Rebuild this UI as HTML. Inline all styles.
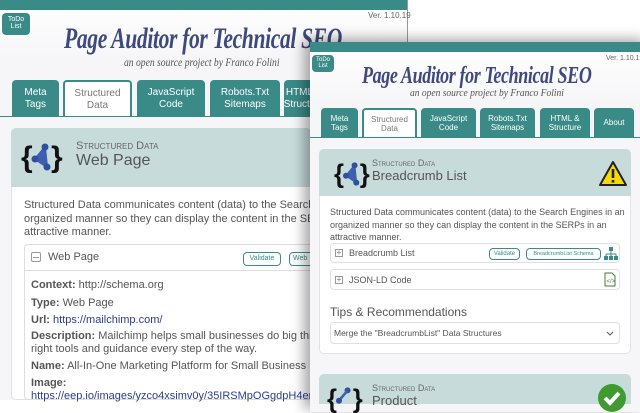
<!DOCTYPE html>
<html><head><meta charset="utf-8"><style>
*{margin:0;padding:0;box-sizing:border-box}
body{width:640px;height:400px;overflow:hidden;background:#fff;font-family:"Liberation Sans",sans-serif;position:relative;color:#555}
.a{position:absolute}
.teal{background:#3a8a88}
.todo{background:#3a8a88;color:#fff;border-radius:4px;text-align:center;line-height:1.05}
.title{font-family:"Liberation Serif",serif;font-style:italic;font-weight:bold;color:#3f4a7c;white-space:nowrap;letter-spacing:-0.5px;transform-origin:0 0}
.sub{font-family:"Liberation Serif",serif;font-style:italic;color:#555;white-space:nowrap;transform-origin:0 0}
.tab{position:absolute;background:#3a8a88;color:#fff;text-align:center;border-radius:4px 4px 0 0;display:flex;align-items:center;justify-content:center;line-height:1.15}
.tab.act{background:#fff;color:#777;border:2px solid #3a8a88;border-bottom:none}
.hdr{background:#c8dbdb;border-radius:5px 5px 0 0}
.sc{font-variant:small-caps;color:#666}
.btn{position:absolute;border:1px solid #3a8a88;border-radius:4px;color:#3a8a88;text-align:center;background:#fff}
.t{white-space:nowrap}
b{color:#555}
</style></head><body>
<div class="a" style="left:0;top:0;width:407px;height:400px;background:linear-gradient(#fff,#f6f6f8 60px,#f6f6f8)"></div>
<div class="a teal" style="left:0;top:0;width:407px;height:10px"></div>
<div class="a" style="left:407px;top:0;width:1px;height:42px;background:#999"></div>
<div class="a todo" style="left:2px;top:13px;width:28px;height:22px;font-size:7px;padding-top:3px">ToDo<br>List</div>
<div class="a t" style="left:368px;top:11px;font-size:8px;color:#666">Ver. 1.10.19</div>
<div class="a title" style="left:64px;top:22px;font-size:30px;transform:scaleX(0.72)">Page Auditor for Technical SEO</div>
<div class="a sub" style="left:124px;top:55px;font-size:12px;transform:scaleX(0.8)">an open source project by Franco Folini</div>
<div class="tab" style="left:12px;top:80px;width:47px;height:37px;font-size:10px">Meta<br>Tags</div>
<div class="tab act" style="left:63px;top:80px;width:69px;height:37px;font-size:10px">Structured<br>Data</div>
<div class="tab" style="left:137px;top:80px;width:68px;height:37px;font-size:10px">JavaScript<br>Code</div>
<div class="tab" style="left:210px;top:80px;width:70px;height:37px;font-size:10px">Robots.Txt<br>Sitemaps</div>
<div class="tab" style="left:284px;top:80px;width:40px;height:37px;font-size:10px">HTML &amp;<br>Structure</div>
<div class="a teal" style="left:0;top:116px;width:310px;height:1px"></div>
<div class="a" style="left:11px;top:128px;width:300px;height:272px;background:#fff;border:1px solid #e2e2e2;border-radius:5px"></div>
<div class="a hdr" style="left:11px;top:128px;width:300px;height:59px"></div>
<svg class="a" style="left:21px;top:141px" width="42" height="32" viewBox="0 0 42 32"><text x="0" y="26" font-size="30" font-weight="bold" font-family="Liberation Sans" fill="#111">{</text><text x="30" y="26" font-size="30" font-weight="bold" font-family="Liberation Sans" fill="#111">}</text><path d="M24 6 L14 18 L26 26 Z" fill="#3c5fb0" stroke="#3c5fb0" stroke-width="2"/><circle cx="24" cy="6" r="3.5" fill="#2f4fa0"/><circle cx="14" cy="18" r="3.5" fill="#2f4fa0"/><circle cx="26" cy="26" r="3.5" fill="#2f4fa0"/></svg>
<div class="a sc t" style="left:76px;top:140px;font-size:11px">Structured Data</div>
<div class="a t" style="left:76px;top:152px;font-size:16px;color:#555">Web Page</div>
<div class="a" style="left:24px;top:199px;width:290px;font-size:11px;line-height:13.5px;color:#555;white-space:nowrap">Structured Data communicates content (data) to the Search Engines in an<br>organized manner so they can display the content in the SERPs in an<br>attractive manner.</div>
<div class="a" style="left:24px;top:244px;width:290px;height:156px;border:1px solid #ddd;border-radius:4px"></div>
<div class="a" style="left:24px;top:270px;width:290px;height:1px;background:#ddd"></div>
<div class="a" style="left:31px;top:252px;width:10px;height:10px;border:1px solid #999;border-radius:2px"></div>
<div class="a" style="left:33px;top:257px;width:6px;height:1px;background:#999"></div>
<div class="a t" style="left:48px;top:251px;font-size:11px">Web Page</div>
<div class="btn" style="left:243px;top:252px;width:38px;height:14px;font-size:7px;line-height:12px">Validate</div>
<div class="btn" style="left:289px;top:252px;width:40px;height:14px;font-size:7px;line-height:12px;text-align:left;padding-left:3px">Web</div>
<div class="a" style="left:31px;top:277px;font-size:11px;line-height:17.5px;white-space:nowrap;color:#555">
<b>Context:</b> http://schema.org<br><b>Type:</b> Web Page<br><b>Url:</b> <span style="color:#2a3d8f">https://mailchimp.com/</span></div>
<div class="a" style="left:31px;top:330px;font-size:11px;line-height:13px;white-space:nowrap;color:#555"><b>Description:</b> Mailchimp helps small businesses do big things, with the<br>right tools and guidance every step of the way.</div>
<div class="a t" style="left:31px;top:360px;font-size:11px"><b>Name:</b> All-In-One Marketing Platform for Small Business | Mailchimp</div>
<div class="a t" style="left:31px;top:377px;font-size:11px"><b>Image:</b></div>
<div class="a t" style="left:31px;top:390px;font-size:11px;color:#2a3d8f">https://eep.io/images/yzco4xsimv0y/35IRSMpOGgdpH4erz</div>
<!-- front window -->
<div class="a" style="left:310px;top:42px;width:340px;height:370px;background:linear-gradient(#fff,#f6f6f8 60px,#f6f6f8);box-shadow:-6px -3px 12px rgba(0,0,0,.35)"></div>
<div class="a teal" style="left:310px;top:42px;width:330px;height:10px"></div>
<div class="a todo" style="left:312px;top:55px;width:22px;height:17px;font-size:6px;padding-top:2px">ToDo<br>List</div>
<div class="a t" style="left:606px;top:55px;font-size:7px;color:#666">Ver. 1.10.19</div>
<div class="a title" style="left:362px;top:63px;font-size:24px;transform:scaleX(0.75)">Page Auditor for Technical SEO</div>
<div class="a sub" style="left:410px;top:88px;font-size:10px;transform:scaleX(0.95)">an open source project by Franco Folini</div>
<div class="tab" style="left:321px;top:108px;width:37px;height:30px;font-size:8px">Meta<br>Tags</div>
<div class="tab act" style="left:362px;top:108px;width:55px;height:30px;font-size:8px">Structured<br>Data</div>
<div class="tab" style="left:421px;top:108px;width:55px;height:30px;font-size:8px">JavaScript<br>Code</div>
<div class="tab" style="left:480px;top:108px;width:55px;height:30px;font-size:8px">Robots.Txt<br>Sitemaps</div>
<div class="tab" style="left:540px;top:108px;width:50px;height:30px;font-size:8px">HTML &amp;<br>Structure</div>
<div class="tab" style="left:594px;top:108px;width:40px;height:30px;font-size:8px">About</div>
<div class="a teal" style="left:310px;top:137px;width:330px;height:1px"></div>
<div class="a" style="left:319px;top:149px;width:312px;height:205px;background:#fff;border:1px solid #e2e2e2;border-radius:5px"></div>
<div class="a hdr" style="left:319px;top:149px;width:312px;height:47px"></div>
<svg class="a" style="left:334px;top:160px" width="36" height="28" viewBox="0 0 42 32"><text x="0" y="26" font-size="30" font-weight="bold" font-family="Liberation Sans" fill="#111">{</text><text x="30" y="26" font-size="30" font-weight="bold" font-family="Liberation Sans" fill="#111">}</text><path d="M24 6 L14 18 L26 26 Z" fill="#3c5fb0" stroke="#3c5fb0" stroke-width="2"/><circle cx="24" cy="6" r="3.5" fill="#2f4fa0"/><circle cx="14" cy="18" r="3.5" fill="#2f4fa0"/><circle cx="26" cy="26" r="3.5" fill="#2f4fa0"/></svg>
<div class="a sc t" style="left:372px;top:158px;font-size:9px">Structured Data</div>
<div class="a t" style="left:372px;top:168px;font-size:13px">Breadcrumb List</div>
<svg class="a" style="left:598px;top:160px" width="30" height="27" viewBox="0 0 30 27"><path d="M15 2 L28 25 L2 25 Z" fill="#f5d90a" stroke="#222" stroke-width="2" stroke-linejoin="round"/><rect x="13.7" y="9" width="2.6" height="9" fill="#222"/><rect x="13.7" y="20" width="2.6" height="2.6" fill="#222"/></svg>
<div class="a" style="left:330px;top:206px;font-size:9px;line-height:12.5px;white-space:nowrap;color:#555">Structured Data communicates content (data) to the Search Engines in an<br>organized manner so they can display the content in the SERPs in an<br>attractive manner.</div>
<div class="a" style="left:330px;top:243px;width:290px;height:20px;border:1px solid #e0e0e0;border-radius:4px"></div>
<div class="a" style="left:335px;top:249px;width:8px;height:8px;border:1px solid #999;font-size:8px;line-height:6px;text-align:center;color:#777">+</div>
<div class="a t" style="left:349px;top:248px;font-size:9px">Breadcrumb List</div>
<div class="btn" style="left:489px;top:248px;width:31px;height:12px;font-size:6px;line-height:10px">Validate</div>
<div class="btn" style="left:526px;top:248px;width:75px;height:12px;font-size:5.5px;line-height:10px">BreadcrumbList Schema</div>
<svg class="a" style="left:604px;top:247px" width="14" height="13"><rect x="5" y="0" width="4" height="4" fill="#3a8a88"/><path d="M7 4v3M2 7h10M2 7v2M7 7v2M12 7v2" stroke="#3a8a88" fill="none"/><rect x="0" y="9" width="4" height="4" fill="#3a8a88"/><rect x="5" y="9" width="4" height="4" fill="#3a8a88"/><rect x="10" y="9" width="4" height="4" fill="#3a8a88"/></svg>
<div class="a" style="left:330px;top:269px;width:290px;height:21px;border:1px solid #e0e0e0;border-radius:4px"></div>
<div class="a" style="left:335px;top:276px;width:8px;height:8px;border:1px solid #999;font-size:8px;line-height:6px;text-align:center;color:#777">+</div>
<div class="a t" style="left:349px;top:275px;font-size:9px">JSON-LD Code</div>
<svg class="a" style="left:604px;top:272px" width="12" height="15"><path d="M1 1h7l3 3v10H1z" fill="#fff" stroke="#4a7a3a"/><text x="2.5" y="11" font-size="6" fill="#4a7a3a">&lt;/&gt;</text></svg>
<div class="a t" style="left:330px;top:305px;font-size:12px;color:#555">Tips &amp; Recommendations</div>
<div class="a" style="left:330px;top:322px;width:290px;height:22px;border:1px solid #e0e0e0;border-radius:4px"></div>
<div class="a t" style="left:334px;top:328px;font-size:8.5px">Merge the "BreadcrumbList" Data Structures</div>
<svg class="a" style="left:606px;top:331px" width="8" height="5"><path d="M1 1l3 3l3-3" stroke="#555" fill="none"/></svg>
<div class="a hdr" style="left:319px;top:374px;width:312px;height:30px"></div>
<svg class="a" style="left:327px;top:385px" width="36" height="28" viewBox="0 0 42 32"><text x="0" y="26" font-size="30" font-weight="bold" font-family="Liberation Sans" fill="#111">{</text><text x="30" y="26" font-size="30" font-weight="bold" font-family="Liberation Sans" fill="#111">}</text><circle cx="24" cy="6" r="3.5" fill="#2f4fa0"/><path d="M24 6 L14 18" stroke="#3c5fb0" stroke-width="3"/><circle cx="14" cy="18" r="3.5" fill="#2f4fa0"/></svg>
<div class="a sc t" style="left:372px;top:383px;font-size:9px">Structured Data</div>
<div class="a t" style="left:372px;top:393px;font-size:13px">Product</div>
<svg class="a" style="left:597px;top:383px" width="30" height="30"><circle cx="15" cy="15" r="14" fill="#3f9a2f"/><path d="M8 15l5 5l9-10" stroke="#fff" stroke-width="4" fill="none"/></svg>
</body></html>
